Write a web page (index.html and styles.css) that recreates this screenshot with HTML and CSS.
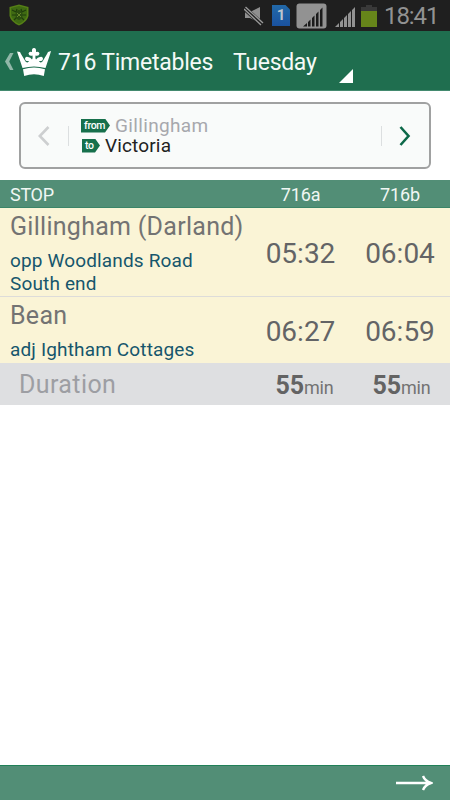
FILE: index.html
```
<!DOCTYPE html>
<html lang="en">
<head>
    <meta charset="UTF-8">
    <meta name="viewport" content="width=device-width, initial-scale=1.0">
    <title>716 Timetables</title>
    <link rel="stylesheet" href="styles.css">
</head>
<body>

<!-- Status bar -->
<div class="status-bar">
    <svg class="shield" width="20" height="22" viewBox="0 0 20 22">
        <path d="M10 0.5 L19.5 3 V12 Q18 18 10 21.5 Q2 18 .5 12 V3 Z" fill="#568016"/>
        <path d="M10 2 L18 4 V12 Q16 17 10 20 Q4 17 2 12 V4 Z" fill="#3f6a13"/>
        <path d="M3 6 L7 8 L8 5 M17 6 L13 8 L12 5 M3 11 H7 M17 11 H13 M5 16 L8 13 M15 16 L12 13" stroke="#1f3d0c" stroke-width="1.2" fill="none"/>
        <ellipse cx="10" cy="11" rx="3.5" ry="5" fill="#2b4d10"/>
        <path d="M8 9 L12 13 M12 9 L8 13" stroke="#64852a"/>
    </svg>
    <div class="status-icons">
        <svg class="mute" width="20" height="20" viewBox="0 0 20 20">
            <path d="M1 6 H6 L16 1 V17 L6 12 H1 Z" fill="#8f8f8f"/>
            <path d="M0 2 L18 18" stroke="#1f1f1f" stroke-width="5"/>
            <path d="M0 3 L17 19 M1.5 1 L19 17" stroke="#999" stroke-width="1.4"/>
        </svg>
        <div class="sim">1</div>
        <svg class="signal-box" width="31" height="26" viewBox="0 0 31 26">
            <rect x=".5" y=".5" width="30" height="25" rx="3" fill="#929292"/>
            <path d="M7 23.5 L11 20 V23.5 Z M12 19 L14.5 16.5 V23.5 H12 Z M16 15 L18.5 12.5 V23.5 H16 Z M20 11 L22.5 8.5 V23.5 H20 Z M24 7 L26.5 4.5 V23.5 H24 Z" fill="#1b1b1b"/>
        </svg>
        <svg class="signal" width="20" height="20" viewBox="0 0 20 20">
            <path d="M0 20 L4 16 V20 Z M5 15 L8 12 V20 H5 Z M9 11 L12 8 V20 H9 Z M13 7 L16 4 V20 H13 Z M17 3 L20 0 V20 H17 Z" fill="#929292"/>
        </svg>
        <svg class="battery" width="16" height="22" viewBox="0 0 16 22">
            <path d="M5 0 H11 V2 H16 V22 H0 V2 H5 Z" fill="#393939"/>
            <rect y="6" width="16" height="16" fill="#66851a"/>
        </svg>
        <span class="clock">18:41</span>
    </div>
</div>

<!-- Action bar -->
<div class="action-bar">
    <svg class="back" width="10" height="20" viewBox="0 0 10 20">
        <path d="M5 1 H8.5 L4.2 9.5 L8.5 18 H5 L0 9.5 Z" fill="#90b7a8"/>
    </svg>
    <svg class="crown" width="34" height="29" viewBox="0 0 34 29">
        <path d="M0 3.5 L3 4 L4 6 L8.5 13.5 Q11 15.5 12 13 Q8 13.5 8 10.5 Q8.5 8 11 9 Q13.5 9 15 11.5 Q16 9.5 15.5 7.5 Q12 8.5 11.5 5.5 Q12 3 15 4 Q14.5 0 17 0 Q19.5 0 19 4 Q22 3 22.5 5.5 Q22 8.5 18.5 7.5 Q18 9.5 19 11.5 Q20.5 9 23 9 Q25.5 8 26 10.5 Q26 13.5 22 13 Q23 15.5 25.5 13.5 L30 6 L31 4 L34 3 L33 6.5 L28.5 20 Q17 17 5.5 20 L1 6.5 Z" fill="#fff"/>
        <path d="M6 21.2 Q17 18 28 21.2 L26.8 28 Q17 24.5 7.2 28 Z" fill="#fff"/>
    </svg>
    <h1 class="title">716 Timetables</h1>
    <div class="day">
        <span class="day-name">Tuesday</span>
        <svg class="spinner" width="14" height="14" viewBox="0 0 14 14"><path d="M14 0 V14 H0 Z" fill="#fff"/></svg>
    </div>
</div>

<!-- Direction picker -->
<div class="direction">
    <svg class="arrow" width="12" height="20" viewBox="0 0 12 20"><path d="M10.5 1 L1.8 10 L10.5 19" stroke="#cdcfd0" stroke-width="2.6" fill="none"/></svg>
    <div class="divider"></div>
    <div class="places">
        <div class="place from"><span class="tag">from</span><span class="place-name">Gillingham</span></div>
        <div class="place to"><span class="tag">to</span><span class="place-name">Victoria</span></div>
    </div>
    <div class="divider"></div>
    <svg class="arrow" width="12" height="20" viewBox="0 0 12 20"><path d="M1.5 1 L9.5 10 L1.5 19" stroke="#0d6949" stroke-width="2.6" fill="none"/></svg>
</div>

<!-- Timetable -->
<div class="timetable">
    <div class="row head">
        <div class="stop">STOP</div>
        <div class="cell">716a</div>
        <div class="cell">716b</div>
    </div>
    <div class="row departure">
        <div class="stop">
            <div class="stop-name">Gillingham (Darland)</div>
            <div class="stop-detail">opp Woodlands Road<br>South end</div>
        </div>
        <div class="cell time">05:32</div>
        <div class="cell time">06:04</div>
    </div>
    <div class="row arrival">
        <div class="stop">
            <div class="stop-name">Bean</div>
            <div class="stop-detail">adj Ightham Cottages</div>
        </div>
        <div class="cell time">06:27</div>
        <div class="cell time">06:59</div>
    </div>
    <div class="row duration">
        <div class="stop">Duration</div>
        <div class="cell"><b>55</b>min</div>
        <div class="cell"><b>55</b>min</div>
    </div>
</div>

<div class="bottom-bar">
    <svg width="38" height="18" viewBox="0 0 38 18"><path d="M1 9 H35 M28 2 Q30 7 36 9 Q30 11 28 16" stroke="#fff" stroke-width="2.4" fill="none"/></svg>
</div>

</body>
</html>
```
FILE: styles.css
```
* {
    box-sizing: border-box;
}

body {
    font-family: Roboto, sans-serif;
    background-color: #fff;
    margin: 0;
    height: 800px;
    display: flex;
    flex-direction: column;
    overflow: hidden;
}

svg {
    display: block;
    flex-shrink: 0;
}

.status-bar {
    height: 31px;
    flex-shrink: 0;
    background-color: #1f1f1f;
    display: flex;
    justify-content: space-between;
    align-items: flex-start;
    padding: 2px 12px 0 9px;
}

.shield {
    margin-top: 2px;
}

.status-icons {
    display: flex;
    align-items: flex-start;
}

.mute {
    margin: 4px 8px 0 0;
}

.sim {
    width: 18px;
    height: 21px;
    margin: 3px 6px 0 0;
    background: linear-gradient(#2269a8, #1a529f);
    clip-path: polygon(0 0, 75% 0, 100% 22%, 100% 100%, 0 100%);
    color: #bdc6cf;
    font-size: 15px;
    font-weight: bold;
    line-height: 21px;
    text-align: center;
}

.signal-box {
    margin: 1px 8px 0 0;
}

.signal {
    margin: 5px 6px 0 0;
}

.battery {
    margin: 3px 7px 0 0;
}

.clock {
    width: 54px;
    color: #929292;
    font-size: 24px;
    line-height: 28px;
    letter-spacing: -1.1px;
    white-space: nowrap;
}

.action-bar {
    height: 60px;
    flex-shrink: 0;
    background-color: #1f6e4f;
    border-bottom: 1px solid #438a6f;
    display: flex;
    align-items: center;
    padding-left: 5px;
    color: #f5faf7;
    font-size: 23px;
}

.back {
    margin: 2px 2px 0 0;
}

.crown {
    margin-top: 3px;
}

.title {
    width: 175px;
    margin: 3px 0 0 7px;
    font-size: 23px;
    font-weight: normal;
    letter-spacing: -0.22px;
    white-space: nowrap;
}

.day {
    display: flex;
    align-items: center;
    width: 120px;
    justify-content: space-between;
}

.day-name {
    margin-top: 3px;
    letter-spacing: -0.3px;
}

.spinner {
    margin-top: 30px;
}

.direction {
    height: 67px;
    flex-shrink: 0;
    margin: 11px 19px 11px;
    border: 2px solid #a0a1a1;
    border-radius: 6px;
    background-color: #f9fbfa;
    display: flex;
    align-items: center;
    padding: 0 18px 0 17px;
}

.divider {
    width: 1px;
    height: 20px;
    margin: 0 17px 0 18px;
    background-color: #dcdfe0;
}

.direction .divider:first-of-type {
    margin: 0 12px 0 18px;
}

.places {
    flex: 1;
}

.place {
    display: flex;
    align-items: center;
    height: 20px;
    font-size: 19px;
    line-height: 20px;
}

.tag {
    height: 14px;
    padding-left: 3px;
    margin-right: 5px;
    background-color: #17704c;
    clip-path: polygon(0 0, calc(100% - 5px) 0, 100% 50%, calc(100% - 5px) 100%, 0 100%);
    color: #fff;
    font-size: 10.5px;
    font-weight: 500;
    letter-spacing: -0.3px;
    line-height: 13px;
}

.from .tag {
    width: 29px;
}

.to .tag {
    width: 18px;
    margin-left: 1px;
}

.from .place-name {
    color: #a7a8ad;
    letter-spacing: 0.35px;
}

.to .place-name {
    color: #222;
    letter-spacing: 0.15px;
}

.row {
    display: grid;
    grid-template-columns: 251px 99px 100px;
    align-items: center;
    background-color: #faf4d6;
}

.stop {
    padding-left: 10px;
    white-space: nowrap;
}

.cell {
    text-align: center;
}

.head {
    height: 28px;
    background-color: #528e76;
    border-bottom: 1px solid #3b8568;
    color: #f0f7f3;
    font-size: 18px;
}

.head .stop {
    padding-top: 2px;
    letter-spacing: -0.3px;
}

.head .cell {
    padding-top: 2px;
    letter-spacing: -0.1px;
}

.departure {
    height: 89px;
    border-bottom: 1px solid #dddcd9;
}

.arrival {
    height: 66px;
}

.departure .stop,
.arrival .stop {
    align-self: start;
}

.stop-name {
    height: 41px;
    color: #737373;
    font-size: 25px;
    line-height: 37px;
    letter-spacing: 0.28px;
}

.stop-detail {
    color: #16566c;
    font-size: 19px;
    line-height: 23px;
    letter-spacing: 0.15px;
}

.time {
    padding-top: 2px;
    color: #636466;
    font-size: 28px;
}

.duration {
    height: 42px;
    background-color: #dedfe1;
    color: #9d9ea3;
    font-size: 25px;
}

.duration .stop {
    padding-left: 19px;
    padding-top: 1px;
    letter-spacing: 0.4px;
}

.duration .cell {
    padding: 2px 0 0 8px;
    color: #737373;
    font-size: 18px;
    letter-spacing: -0.2px;
}

.duration .cell:last-child {
    padding-left: 3px;
}

.duration b {
    color: #636363;
    font-size: 25px;
}

.bottom-bar {
    height: 35px;
    flex-shrink: 0;
    margin-top: auto;
    background-color: #528e76;
    border-top: 1px solid #218058;
    display: flex;
    align-items: center;
    justify-content: flex-end;
    padding-right: 17px;
}
```
